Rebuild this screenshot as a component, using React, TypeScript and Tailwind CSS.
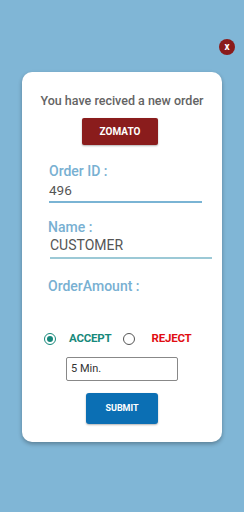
const OrderPopup = () => {
  return (
    <div className="w-[244px] h-[512px] bg-[#80b6d6] flex flex-col font-['Roboto',sans-serif] overflow-hidden">
      {/* close */}
      <div className="flex justify-end pt-[39px] pr-[9px]">
        <div className="w-4 h-4 rounded-full bg-[#8a1b1b] text-white text-[10px] font-bold flex items-center justify-center leading-none">
          x
        </div>
      </div>

      <div className="mt-[17px] ml-[22px] w-[200px] h-[370px] bg-white rounded-[10px] shadow-[0_2px_4px_rgba(0,0,0,0.3)] flex flex-col">
        <div className="mt-[21px] text-center text-[12.5px] font-medium text-[#646464] leading-[16px]">
          You have recived a new order
        </div>
        <div className="mt-[9px] ml-[60px] w-[76px] h-[27px] bg-[#8a1c1c] rounded-[2px] text-white text-[10px] font-bold flex items-center justify-center shadow-[0_1px_2px_rgba(0,0,0,0.3)]">
          ZOMATO
        </div>

        {/* Order ID */}
        <div className="mt-[18px] ml-[27px] text-[14px] font-medium text-[#78b0d2] leading-[16px]">Order ID :</div>
        <div className="mt-[3px] ml-[27px] w-[153px] border-b-2 border-[#7ab4d4] text-[13.5px] text-[#555] leading-[17px] pb-[2px]">
          496
        </div>

        {/* Name */}
        <div className="mt-[16px] ml-[26px] text-[14px] font-medium text-[#78b0d2] leading-[16px]">Name :</div>
        <div className="mt-[2px] ml-[28px] w-[162px] border-b-2 border-[#9cc9d6] text-[14px] text-[#555] leading-[17px] pb-[3px]">
          CUSTOMER
        </div>

        {/* Amount */}
        <div className="mt-[19px] ml-[26px] text-[14px] font-medium text-[#78b0d2] leading-[16px]">OrderAmount :</div>

        {/* Accept / Reject */}
        <div className="mt-[38px] ml-[22px] flex items-center h-[14px]">
          <div className="w-3 h-3 rounded-full border-[1.5px] border-[#16877a] flex items-center justify-center">
            <div className="w-[6px] h-[6px] rounded-full bg-[#16877a]" />
          </div>
          <span className="ml-[13px] text-[11.5px] font-bold text-[#17897b] tracking-[-0.2px]">ACCEPT</span>
          <div className="ml-[12px] w-3 h-3 rounded-full border-[1.5px] border-[#555]" />
          <span className="ml-[16px] text-[11.5px] font-bold text-[#e10d12] tracking-[-0.2px]">REJECT</span>
        </div>

        <div className="mt-[11px] ml-[44px] w-[112px] h-[24px] border border-[#888] rounded-[2px] flex items-center pl-[4px] text-[11px] text-[#333]">
          5 Min.
        </div>

        <div className="mt-[12px] ml-[64px] w-[72px] h-[31px] bg-[#0b6fb4] rounded-[3px] text-white text-[9px] font-bold flex items-center justify-center shadow-[0_1px_2px_rgba(0,0,0,0.3)]">
          SUBMIT
        </div>
      </div>
    </div>
  );
};

export default function App() {
  return <OrderPopup />;
}
